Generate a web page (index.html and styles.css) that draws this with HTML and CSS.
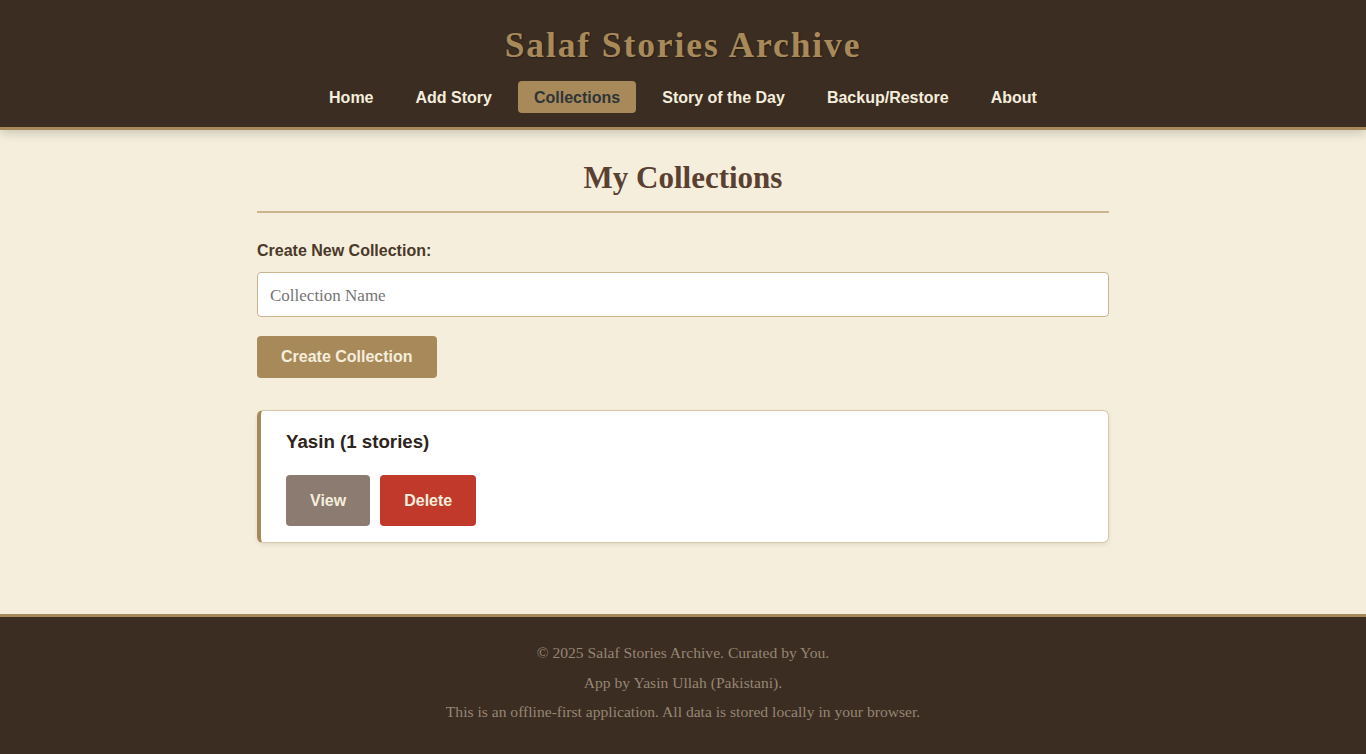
FILE: index.html
```html
<!DOCTYPE html>
<html lang="en">
<head>
<meta charset="utf-8">
<title>Salaf Stories Archive</title>
<link rel="stylesheet" href="styles.css">
</head>
<body>
<header class="site-header">
  <h1 class="site-title">Salaf Stories Archive</h1>
  <nav class="main-nav">
    <a href="#" class="nav-link">Home</a>
    <a href="#" class="nav-link">Add Story</a>
    <a href="#" class="nav-link active">Collections</a>
    <a href="#" class="nav-link">Story of the Day</a>
    <a href="#" class="nav-link">Backup/Restore</a>
    <a href="#" class="nav-link">About</a>
  </nav>
</header>
<main class="content">
  <h2 class="page-title">My Collections</h2>
  <label class="field-label" for="cname">Create New Collection:</label>
  <input id="cname" class="text-input" type="text" placeholder="Collection Name">
  <button class="btn btn-primary">Create Collection</button>
  <div class="collection-card">
    <h3 class="collection-title">Yasin (1 stories)</h3>
    <div class="card-actions">
      <button class="btn btn-view">View</button>
      <button class="btn btn-delete">Delete</button>
    </div>
  </div>
</main>
<footer class="site-footer">
  <p>© 2025 Salaf Stories Archive. Curated by You.</p>
  <p>App by Yasin Ullah (Pakistani).</p>
  <p>This is an offline-first application. All data is stored locally in your browser.</p>
</footer>
</body>
</html>
```
FILE: styles.css
```css
* { box-sizing: border-box; }
html, body { margin: 0; padding: 0; }
body {
  background: #f5eedc;
  font-family: "Liberation Sans", Arial, sans-serif;
  color: #3b2d22;
  min-height: 100vh;
  display: flex;
  flex-direction: column;
}
.site-header {
  background: #3b2d22;
  border-bottom: 3px solid #a88a5a;
  box-shadow: 0 3px 10px rgba(0,0,0,0.18);
  padding: 26px 0 14px;
  text-align: center;
  position: relative;
  z-index: 1;
}
.site-title {
  margin: 0;
  font-family: "Liberation Serif", "DejaVu Serif", serif;
  font-weight: bold;
  font-size: 35.5px;
  line-height: 39px;
  letter-spacing: 1.9px;
  color: #a88a5a;
  text-shadow: 1px 1px 2px rgba(0,0,0,0.35);
}
.main-nav {
  display: flex;
  justify-content: center;
  gap: 10px;
  margin-top: 16px;
}
.nav-link {
  display: block;
  padding: 8px 16px 6px;
  line-height: 18px;
  font-size: 16px;
  font-weight: bold;
  color: #f5eedc;
  text-decoration: none;
  border-radius: 4px;
}
.nav-link.active {
  background: #a88a5a;
  color: #2f3437;
}
.content {
  flex: 1;
  width: 852px;
  margin: 0 auto;
  padding: 30px 0 71px;
}
.page-title {
  margin: 0;
  padding-bottom: 15px;
  border-bottom: 2px solid #c8b48e;
  text-align: center;
  font-family: "Liberation Serif", "DejaVu Serif", serif;
  font-weight: bold;
  font-size: 31px;
  line-height: 36px;
  color: #5a4030;
}
.field-label {
  display: block;
  margin-top: 29px;
  margin-bottom: 12px;
  font-size: 16px;
  line-height: 18px;
  font-weight: bold;
  color: #4a3828;
}
.text-input {
  display: block;
  width: 100%;
  padding: 13px 12px 11px;
  font-family: "Liberation Serif", serif;
  font-size: 17px;
  line-height: 18px;
  height: 45px;
  border: 1px solid #c8b48e;
  border-radius: 4px;
  background: #fff;
  color: #3b2d22;
}
.text-input::placeholder { color: #757575; }
.btn {
  border: none;
  border-radius: 4px;
  font-family: "Liberation Sans", Arial, sans-serif;
  font-weight: bold;
  font-size: 16px;
  line-height: 18px;
  color: #f5eedc;
  cursor: pointer;
}
.btn-primary {
  display: block;
  margin-top: 19px;
  padding: 12px 24px;
  background: #a88a5a;
}
.collection-card {
  margin-top: 32px;
  background: #fff;
  border: 1px solid #d8c8a8;
  border-left: 4px solid #a88a5a;
  border-radius: 6px;
  box-shadow: 0 2px 5px rgba(0,0,0,0.08);
  padding: 20px 25px 16px;
}
.collection-title {
  margin: 0;
  font-size: 18.7px;
  line-height: 22px;
  font-weight: bold;
  color: #2e241b;
}
.card-actions {
  display: flex;
  gap: 10px;
  margin-top: 22px;
}
.card-actions .btn {
  padding: 16px 24px;
  line-height: 19px;
}
.btn-view { background: #8b7b70; }
.btn-delete { background: #c0392b; }
.site-footer {
  background: #3b2d22;
  border-top: 3px solid #a88a5a;
  padding: 25px 0 31px;
  text-align: center;
  font-family: "Liberation Serif", serif;
  font-size: 15.6px;
  color: #968674;
}
.site-footer p {
  margin: 0 0 7.5px;
  line-height: 22px;
}
.site-footer p:last-child { margin-bottom: 0; }
```
